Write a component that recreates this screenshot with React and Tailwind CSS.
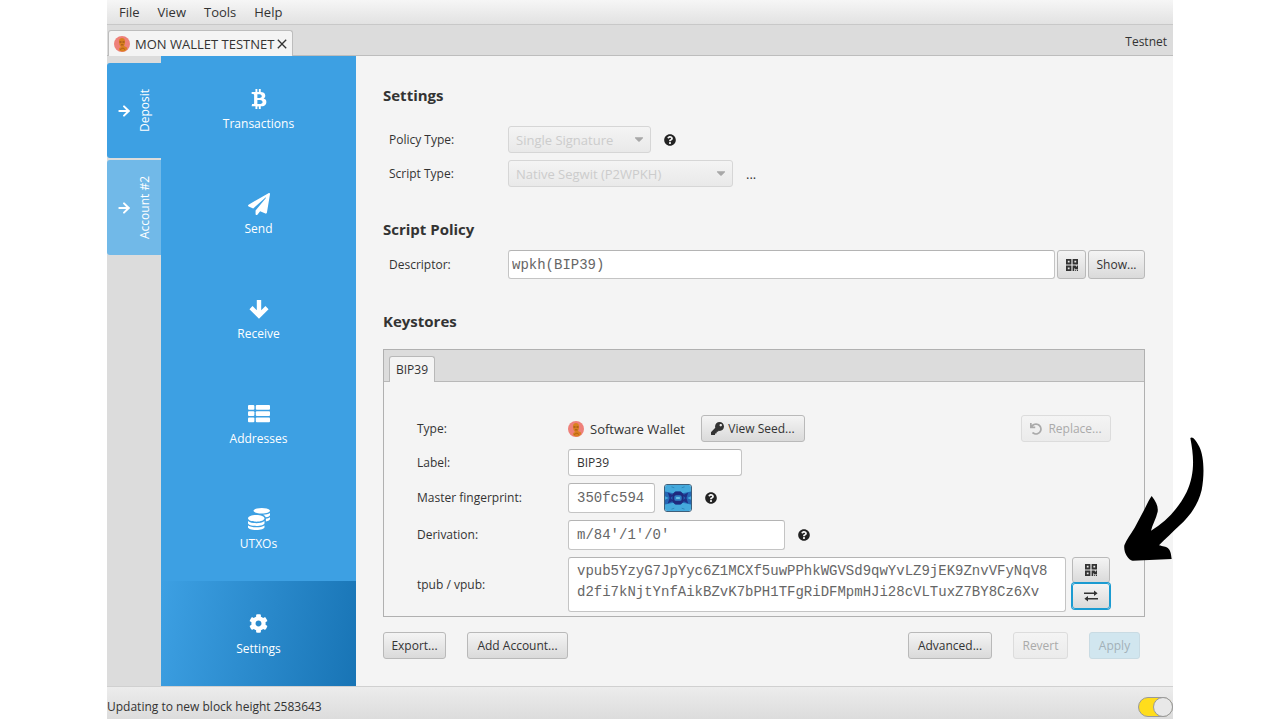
import React, { useState } from 'react';
import {
  FaBtc,
  FaCaretDown,
  FaCog,
  FaCoins,
  FaKey,
  FaPaperPlane,
  FaQuestionCircle,
  FaUndo,
} from 'react-icons/fa';
import { MdClose } from 'react-icons/md';
import { ArrowRight } from 'lucide-react';

const ReceiveIcon = ({ size }) => (
  <svg viewBox="0 0 22 22" width={size} height={size} fill="none" stroke="currentColor" strokeWidth="4.4" aria-hidden="true">
    <path d="M11 2v15M3 9.6l8 8 8-8" strokeLinejoin="miter" />
  </svg>
);

const ListIcon = ({ size }) => (
  <svg viewBox="0 0 22 22" width={size} height={size} fill="currentColor" aria-hidden="true">
    <rect x="0" y="2" width="6.4" height="4.8" rx="1" />
    <rect x="7.8" y="2" width="14.2" height="4.8" rx="1" />
    <rect x="0" y="8.2" width="6.4" height="4.8" rx="1" />
    <rect x="7.8" y="8.2" width="14.2" height="4.8" rx="1" />
    <rect x="0" y="14.4" width="6.4" height="4.8" rx="1" />
    <rect x="7.8" y="14.4" width="14.2" height="4.8" rx="1" />
  </svg>
);

const navItems = [
  { name: 'Transactions', icon: FaBtc, size: 20 },
  { name: 'Send', icon: FaPaperPlane, size: 22 },
  { name: 'Receive', icon: ReceiveIcon, size: 22 },
  { name: 'Addresses', icon: ListIcon, size: 22 },
  { name: 'UTXOs', icon: FaCoins, size: 22 },
  { name: 'Settings', icon: FaCog, size: 19 },
];

const buttonStyles = {
  normal: 'border-[#b9b9b9] bg-gradient-to-b from-[#f4f4f4] to-[#dadada] text-[#333333]',
  disabled: 'border-[#dcdcdc] bg-gradient-to-b from-[#f4f4f4] to-[#ebebeb] text-[#aaaaaa]',
  primary: 'border-[#c9dbe3] bg-[#d1e6ef] text-[#a3b1b8]',
  focused: 'border-[#1b9bd1] ring-1 ring-[#1b9bd1] bg-gradient-to-b from-[#f4f4f4] to-[#dadada] text-[#333333]',
};

const Button = ({ variant = 'normal', className = '', children, ...props }) => (
  <button
    type="button"
    className={`flex items-center justify-center rounded-[3px] border whitespace-nowrap ${buttonStyles[variant]} ${className}`}
    {...props}
  >
    {children}
  </button>
);

const Avatar = () => (
  <svg viewBox="0 0 32 32" className="h-4 w-4 shrink-0" aria-hidden="true">
    <circle cx="16" cy="16" r="16" fill="#ee8079" />
    <path d="M10 10c0-4 3-6 6-6s6 2 6 6c0 4 0 7-2 10l6 3c1 4-3 8-9 8-5 0-7-2-7-5 0-2 2-3 4-4-3-3-4-7-4-12z" fill="#d9801f" />
    <path d="M11 11h4v2h-4zM17 11h4v2h-4zM14 17h5v1.500h-5z" fill="#8a4515" />
    <path d="M12 27l6-3 4 3" stroke="#a9560f" strokeWidth="1.500" fill="none" />
  </svg>
);

const LifeHash = () => (
  <svg viewBox="0 0 28 28" className="ml-[9px] h-7 w-7 rounded-[3px] border border-[#3f5f7a]" aria-hidden="true">
    <rect width="28" height="28" fill="#45a9dc" />
    <path d="M0 7l5 1 4 1 3-2h4l3 2 4-1 5-1v14l-5-1-4-1-3 2h-4l-3-2-4 1-5 1z" fill="#2567b4" />
    <path d="M0 12l4 2-4 2zM28 12l-4 2 4 2z" fill="#45a9dc" />
    <path d="M3 8l6 3-3 3 3 3-6 3 2-6zM25 8l-6 3 3 3-3 3 6 3-2-6z" fill="#1f2f86" />
    <path d="M8 10l3-3h6l3 3v8l-3 3h-6l-3-3z" fill="#1f2a7e" />
    <rect x="10" y="11" width="8" height="6" rx="2" fill="#2f7fc4" />
    <rect x="12" y="13" width="4" height="2" fill="#6cc5e8" />
    <path d="M7 2l3 1M18 3l3-1M7 26l3-1M18 25l3 1" stroke="#2f86b8" strokeWidth="1" />
  </svg>
);

const QrIcon = () => (
  <svg viewBox="0 0 12 12" className="h-3 w-3" fill="currentColor" fillRule="evenodd" aria-hidden="true">
    <path d="M0 0h5.4v5.4H0zM1.8 1.8v1.8h1.8V1.8zM6.6 0H12v5.4H6.6zM8.4 1.8v1.8h1.8V1.8zM0 6.6h5.4V12H0zM1.8 8.4v1.8h1.8V8.4z" />
    <path d="M6.6 6.6h3l.8 1.2h.4V6.6H12v3.6H9.4L8.2 9v3H6.6zM9.2 10.8h1v1.2h-1zM11 10.8h1v1.2h-1z" />
  </svg>
);

const SwapIcon = () => (
  <svg viewBox="0 0 14 12" className="h-3 w-3.5" fill="currentColor" aria-hidden="true">
    <path d="M0 2.4h10V0.4L13.6 3.2 10 6V4H0zM14 8H4V6L0.4 8.8 4 11.6V9.6h10z" />
  </svg>
);

const Help = ({ className = '' }) => (
  <button type="button" aria-label="Help" className={`text-[#222222] ${className}`}>
    <FaQuestionCircle size={12} />
  </button>
);

const DisabledSelect = ({ id, value, className }) => (
  <div className={`relative ${className}`}>
    <select
      id={id}
      disabled
      className="h-[27px] w-full appearance-none rounded-[3px] border border-[#d6d6d6] bg-gradient-to-b from-[#f4f4f4] to-[#e9e9e9] pl-[7px] text-[13px] text-[#cccccc] opacity-100"
    >
      <option>{value}</option>
    </select>
    <FaCaretDown size={14} className="pointer-events-none absolute top-1.5 right-[5px] text-[#a8a8a8]" />
  </div>
);

const fieldClass = 'rounded-[3px] border border-[#c4c4c4] border-t-[#b4b4b4] bg-white outline-none';
const monoClass = "font-['Liberation_Mono',monospace] text-[14px] text-[#666666]";

const SideTab = ({ name, className }) => (
  <button type="button" className={`flex h-[95px] items-center rounded-l-[3px] text-white ${className}`}>
    <ArrowRight size={16} strokeWidth={3} className="ml-[9px] shrink-0" />
    <span className="ml-1 rotate-180 whitespace-nowrap [writing-mode:vertical-rl]">{name}</span>
  </button>
);

const Row = ({ id, label, children }) => (
  <div className="flex items-center">
    <label htmlFor={id} className="w-[151px] shrink-0">{label}</label>
    {children}
  </div>
);

const Keystore = () => (
  <section className="mt-[18px] border border-[#b0b0b0]">
    <div className="flex h-8 items-end border-b border-[#b8b8b8] bg-[#dcdcdc] px-[5px]" role="tablist">
      <button
        type="button"
        role="tab"
        aria-selected="true"
        className="-mb-px h-[26px] rounded-t-[3px] border border-b-0 border-[#b8b8b8] bg-[#f4f4f4] px-1.5"
      >
        BIP39
      </button>
    </div>
    <div className="flex flex-col gap-[7px] px-[33px] pt-[33px] pb-1">
      <div className="flex items-center">
        <span className="w-[151px] shrink-0">Type:</span>
        <Avatar />
        <span className="ml-1.5 text-[13px]">Software Wallet</span>
        <Button className="ml-4 h-[27px] w-[104px] gap-1">
          <FaKey size={13} />
          View Seed...
        </Button>
        <Button variant="disabled" disabled className="ml-auto h-[27px] w-[90px] gap-1.5">
          <FaUndo size={12} />
          Replace...
        </Button>
      </div>
      <Row id="label" label="Label:">
        <input id="label" defaultValue="BIP39" className={`h-[27px] w-[174px] px-2 ${fieldClass}`} />
      </Row>
      <Row id="fingerprint" label="Master fingerprint:">
        <input id="fingerprint" readOnly value="350fc594" className={`h-[30px] w-[87px] px-2 ${fieldClass} ${monoClass}`} />
        <LifeHash />
        <Help className="ml-[13px]" />
      </Row>
      <Row id="derivation" label="Derivation:">
        <input id="derivation" readOnly value="m/84'/1'/0'" className={`h-[30px] w-[217px] px-2 ${fieldClass} ${monoClass}`} />
        <Help className="ml-[13px]" />
      </Row>
      <Row id="xpub" label="tpub / vpub:">
        <textarea
          id="xpub"
          readOnly
          value="vpub5YzyG7JpYyc6Z1MCXf5uwPPhkWGVSd9qwYvLZ9jEK9ZnvVFyNqV8d2fi7kNjtYnfAikBZvK7bPH1TFgRiDFMpmHJi28cVLTuxZ7BY8Cz6Xv"
          className={`h-[55px] min-w-0 flex-1 resize-none overflow-hidden pt-[3px] pr-3 pl-2 leading-[21px] break-all ${fieldClass} ${monoClass}`}
        />
        <div className="mr-px ml-1.5 flex flex-col self-start">
          <Button aria-label="Show QR code" className="h-[26px] w-[38px]">
            <QrIcon />
          </Button>
          <Button variant="focused" aria-label="Switch format" className="h-[26px] w-[38px]">
            <SwapIcon />
          </Button>
        </div>
      </Row>
    </div>
  </section>
);

const SettingsPanel = () => (
  <main className="min-w-0 flex-1 bg-[#f4f4f4] pt-[29px] pr-7 pb-[26px] pl-[27px]">
    <h2 className="text-[15px] leading-5 font-bold">Settings</h2>
    <div className="mt-[21px] flex flex-col gap-[7px] pl-1.5">
      <div className="flex items-center">
        <label htmlFor="policy" className="w-[119px]">Policy Type:</label>
        <DisabledSelect id="policy" value="Single Signature" className="w-[143px]" />
        <Help className="ml-[13px]" />
      </div>
      <div className="flex items-center">
        <label htmlFor="script" className="w-[119px]">Script Type:</label>
        <DisabledSelect id="script" value="Native Segwit (P2WPKH)" className="w-[225px]" />
        <span className="ml-[13px] text-[13px]">...</span>
      </div>
    </div>

    <h2 className="mt-8 text-[15px] leading-5 font-bold">Script Policy</h2>
    <div className="mt-[11px] flex items-center pl-1.5">
      <label htmlFor="descriptor" className="w-[119px]">Descriptor:</label>
      <input
        id="descriptor"
        readOnly
        value="wpkh(BIP39)"
        className={`h-[29px] min-w-0 flex-1 px-[3px] ${fieldClass} ${monoClass}`}
      />
      <Button aria-label="Show QR code" className="ml-0.5 h-[29px] w-[29px]">
        <QrIcon />
      </Button>
      <Button className="ml-0.5 h-[29px] w-[57px]">Show...</Button>
    </div>

    <h2 className="mt-8 text-[15px] leading-5 font-bold">Keystores</h2>
    <Keystore />

    <div className="mt-[15px] flex pr-[5px]">
      <Button className="h-[27px] w-[63px]">Export...</Button>
      <Button className="ml-[21px] h-[27px] w-[101px]">Add Account...</Button>
      <Button className="ml-auto h-[27px] w-[84px]">Advanced...</Button>
      <Button variant="disabled" disabled className="ml-[21px] h-[27px] w-[55px]">Revert</Button>
      <Button variant="primary" disabled className="ml-[21px] h-[27px] w-[51px]">Apply</Button>
    </div>
  </main>
);

const App = () => {
  const [active, setActive] = useState('Settings');
  const [online, setOnline] = useState(true);

  return (
    <div className="relative flex min-h-screen flex-col bg-white px-[107px] pb-px font-['Open_Sans',sans-serif] text-[12px] leading-[18px] text-[#333333]">
      <header className="flex h-[25px] items-center gap-[18px] border-b border-[#c8c8c8] bg-gradient-to-b from-[#f6f6f6] to-[#e2e2e2] px-3 text-[13px]">
        {['File', 'View', 'Tools', 'Help'].map((item) => (
          <button key={item} type="button">{item}</button>
        ))}
      </header>

      <div className="flex h-[31px] items-end border-b border-[#bdbdbd] bg-[#dcdcdc] pl-px">
        <div className="-mb-px flex h-[26px] items-center rounded-t-[3px] border border-b-0 border-[#bdbdbd] bg-[#f4f4f4] pr-0.5 pl-[5px]">
          <Avatar />
          <span className="ml-[5px] text-[13px]">MON WALLET TESTNET</span>
          <button type="button" aria-label="Close tab">
            <MdClose size={16} />
          </button>
        </div>
        <span className="mr-1.5 mb-1 ml-auto">Testnet</span>
      </div>

      <div className="flex flex-1">
        <div className="flex w-[54px] shrink-0 flex-col gap-0.5 bg-[#dcdcdc] pt-[7px]">
          <SideTab name="Deposit" className="bg-[#3da0e3]" />
          <SideTab name="Account #2" className="bg-[#71b9e8]" />
        </div>
        <nav className="flex w-[195px] shrink-0 flex-col bg-[#3da0e3]">
          {navItems.map(({ name, icon: Icon, size }) => (
            <button
              key={name}
              type="button"
              onClick={() => setActive(name)}
              className={`flex flex-1 flex-col items-center justify-center gap-[5px] pt-[3px] text-white ${
                active === name ? 'bg-linear-[100deg] from-[#3da0e3] to-[#1874b5]' : ''
              }`}
            >
              <span className="flex h-[22px] items-center">
                <Icon size={size} />
              </span>
              <span>{name}</span>
            </button>
          ))}
        </nav>
        <SettingsPanel />
      </div>

      <footer className="flex h-[33px] items-center justify-between border-t border-[#d0d0d0] bg-gradient-to-b from-[#ececec] to-[#dcdcdc] pt-[7px]">
        <span>Updating to new block height 2583643</span>
        <input
          type="checkbox"
          role="switch"
          aria-label="Online"
          checked={online}
          onChange={(e) => setOnline(e.target.checked)}
          className="flex h-5 w-[35px] appearance-none rounded-full border border-[#999999] bg-[#e0e0e0] before:-my-px before:-ml-px before:h-5 before:w-5 before:rounded-full before:border before:border-[#999999] before:bg-[#e8e8e8] checked:justify-end checked:bg-[#ffdd1c] checked:before:-mr-px"
        />
      </footer>

      <svg viewBox="0 0 240 372" className="pointer-events-none absolute top-[437px] right-[76px] h-[124px] w-20" aria-hidden="true">
        <path d="M199 3C205 -2 213 4 226 29C240 58 242 110 233 159C222 205 195 240 168 264C145 286 125 305 105 325C128 331 140 328 143 366L26 371C12 369 -2 345 1 325C8 306 20 292 32 272L63 214C71 198 76 186 83 177C97 195 103 208 101 224C96 246 85 262 81 281C125 255 163 215 188 165C213 110 210 60 199 3Z" />
      </svg>
    </div>
  );
};

export default App;
